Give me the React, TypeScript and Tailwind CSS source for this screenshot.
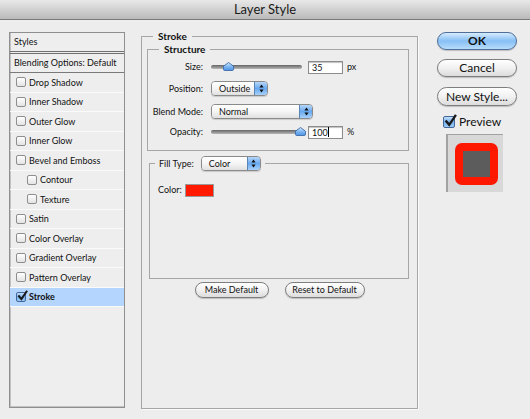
import React from "react";

function Check({ checked = false }: { checked?: boolean }) {
  if (checked) {
    return (
      <span className="relative w-[10px] h-[10px] shrink-0 rounded-[2px] border border-[#44679a] bg-linear-to-b from-[#c4e0fb] via-[#76b0ef] to-[#9ccaf7]">
        <svg viewBox="0 0 12 12" className="absolute -top-[3px] left-[0px] w-[11px] h-[11px]">
          <path d="M1.5 6 L4.8 10 L11 0.8" fill="none" stroke="#1a1a1a" strokeWidth="2.2" />
        </svg>
      </span>
    );
  }
  return (
    <span className="w-[10px] h-[10px] shrink-0 rounded-[2px] border border-[#8e8e8e] bg-linear-to-b from-white to-[#e3e3e3]" />
  );
}

function Popup({ label, w }: { label: string; w: string }) {
  return (
    <div className={`${w} h-[15px] flex rounded-[4px] border border-[#8a8a8a] overflow-hidden shadow-[0_1px_1px_rgba(0,0,0,0.15)]`}>
      <div className="flex-1 flex items-center pl-[7px] text-[9px] bg-linear-to-b from-white via-[#f5f5f5] to-[#e0e0e0]">
        {label}
      </div>
      <div className="w-[13px] border-l border-[#5b84b6] bg-linear-to-b from-[#b5d7f9] via-[#68a8ee] to-[#a8d1fa] flex items-center justify-center">
        <svg width="5" height="9" viewBox="0 0 5 9">
          <path d="M2.5 0.5 L4.6 3.6 H0.4 Z M2.5 8.5 L4.6 5.4 H0.4 Z" fill="#111" />
        </svg>
      </div>
    </div>
  );
}

function Slider({ pos }: { pos: number }) {
  return (
    <div className="relative w-[91px] h-[14px] flex items-center">
      <div className="w-full h-[4px] rounded-full bg-linear-to-b from-[#666] to-[#b8b8b8]" />
      <svg className="absolute top-[2px]" style={{ left: pos }} width="11" height="9" viewBox="0 0 11 9">
        <defs>
          <linearGradient id="thumbg" x1="0" y1="0" x2="0" y2="1">
            <stop offset="0" stopColor="#d8ecff" />
            <stop offset="0.5" stopColor="#7fb8f2" />
            <stop offset="1" stopColor="#4d92e4" />
          </linearGradient>
        </defs>
        <path
          d="M5.5 0.5 L10.5 4.2 V7.3 Q10.5 8.5 9.3 8.5 H1.7 Q0.5 8.5 0.5 7.3 V4.2 Z"
          fill="url(#thumbg)"
          stroke="#3c6ba8"
          strokeWidth="0.9"
        />
      </svg>
    </div>
  );
}

function TextBox({ value, cursor = false }: { value: string; cursor?: boolean }) {
  return (
    <div className="w-[35px] h-[13px] bg-white border border-[#8c8c8c] shadow-[inset_0_1px_1px_rgba(0,0,0,0.25)] text-[9px] leading-[11px] pl-[3px] flex items-center">
      <span>{value}</span>
      {cursor && <span className="w-[1px] h-[10px] bg-black" />}
    </div>
  );
}

function AquaButton({ children, w, primary = false, bold = false, h = "h-[18px]" }: { children: React.ReactNode; w: string; primary?: boolean; bold?: boolean; h?: string }) {
  return (
    <div
      className={`${w} ${h} rounded-full flex items-center justify-center shadow-[0_1px_1px_rgba(0,0,0,0.2)] ${
        primary
          ? "border border-[#4e6f9b] bg-linear-to-b from-[#d6ebfd] via-[#86bff4] to-[#b7dcfb]"
          : "border border-[#7e7e7e] bg-linear-to-b from-white via-[#f1f1f1] to-[#dcdcdc]"
      } ${bold ? "font-bold" : ""}`}
    >
      {children}
    </div>
  );
}

const items: { t: string; indent?: boolean; sel?: boolean }[] = [
  { t: "Drop Shadow" },
  { t: "Inner Shadow" },
  { t: "Outer Glow" },
  { t: "Inner Glow" },
  { t: "Bevel and Emboss" },
  { t: "Contour", indent: true },
  { t: "Texture", indent: true },
  { t: "Satin" },
  { t: "Color Overlay" },
  { t: "Gradient Overlay" },
  { t: "Pattern Overlay" },
  { t: "Stroke", sel: true },
];

export default function App() {
  return (
    <div className="w-[530px] h-[419px] bg-[#ededed] font-['Lato',sans-serif] text-[#111] overflow-hidden">
      <div className="h-[20px] bg-linear-to-b from-[#e9e9e9] to-[#bababa] border-b border-[#7a7a7a] flex items-center justify-center text-[13px] text-[#1a1a1a]">
        Layer Style
      </div>

      <div className="flex items-start pt-[10px] pl-[9px]">
        {/* Left styles list */}
        <div className="mt-[2px] w-[116px] h-[376px] border border-[#8f8f8f] shadow-[inset_1px_-1px_0_#c2c2c2] bg-[#eeeeee] flex flex-col text-[9px]">
          <div className="h-[18px] flex items-center pl-[4px] border-b-[3px] border-double border-[#6f6f6f] box-content">
            Styles
          </div>
          <div className="h-[19px] flex items-center pl-[4px] border-b border-[#7a7a7a]">
            Blending Options: Default
          </div>
          {items.map((it) => (
            <div
              key={it.t}
              className={`h-[19.5px] flex items-center gap-[3px] border-b border-[#fafafa] ${
                it.indent ? "pl-[17px]" : "pl-[6px]"
              } ${it.sel ? "bg-[#b4d5fd] font-bold" : ""}`}
            >
              <Check checked={it.sel} />
              <span>{it.t}</span>
            </div>
          ))}
        </div>

        {/* Middle stroke panel */}
        <fieldset className="ml-[16px] w-[277px] h-[379px] border border-[#a6a6a6] shadow-[1px_1px_0_#fafafa] flex flex-col">
          <legend className="ml-[11px] px-[5px] text-[10px] leading-[12px] font-bold">Stroke</legend>

          <fieldset className="mt-[1px] ml-[5px] w-[262px] border border-[#a6a6a6] pb-[11px]">
            <legend className="ml-[11px] px-[5px] text-[10px] leading-[12px] font-bold">Structure</legend>
            <div className="flex flex-col text-[9px]">
              <div className="mt-[5px] h-[14px] flex items-center">
                <span className="w-[55px] text-right">Size:</span>
                <div className="ml-[8px]">
                  <Slider pos={12} />
                </div>
                <div className="ml-[6px]">
                  <TextBox value="35" />
                </div>
                <span className="ml-[4px]">px</span>
              </div>
              <div className="mt-[7px] h-[15px] flex items-center">
                <span className="w-[55px] text-right">Position:</span>
                <div className="ml-[8px]">
                  <Popup label="Outside" w="w-[57px]" />
                </div>
              </div>
              <div className="mt-[8px] h-[15px] flex items-center">
                <span className="w-[55px] text-right">Blend Mode:</span>
                <div className="ml-[8px]">
                  <Popup label="Normal" w="w-[102px]" />
                </div>
              </div>
              <div className="mt-[6px] h-[14px] flex items-center">
                <span className="w-[55px] text-right">Opacity:</span>
                <div className="ml-[8px]">
                  <Slider pos={84} />
                </div>
                <div className="ml-[6px]">
                  <TextBox value="100" cursor />
                </div>
                <span className="ml-[4px]">%</span>
              </div>
            </div>
          </fieldset>

          <fieldset className="mt-[5px] ml-[7px] w-[260px] h-[123px] border border-[#a6a6a6]">
            <legend className="ml-[5px] px-[4px] flex items-center text-[9px]">
              <span>Fill Type:</span>
              <div className="ml-[7px]">
                <Popup label="Color" w="w-[60px]" />
              </div>
            </legend>
            <div className="mt-[12px] pl-[8px] h-[14px] flex items-center text-[9px]">
              <span>Color:</span>
              <span className="ml-[3px] w-[29px] h-[13px] bg-[#ff1a00] border border-[#9a9a9a]" />
            </div>
          </fieldset>

          <div className="mt-[3px] flex justify-center gap-[16px] text-[9px]">
            <AquaButton w="w-[74px]" h="h-[16px]">Make Default</AquaButton>
            <AquaButton w="w-[80px]" h="h-[16px]">Reset to Default</AquaButton>
          </div>
        </fieldset>

        {/* Right column */}
        <div className="ml-[19px] w-[80px] flex flex-col text-[12px]">
          <div className="mt-[2px]">
            <AquaButton w="w-[80px]" primary bold>OK</AquaButton>
          </div>
          <div className="mt-[9px]">
            <AquaButton w="w-[80px]">Cancel</AquaButton>
          </div>
          <div className="mt-[10px]">
            <AquaButton w="w-[80px]" h="h-[19px]">New Style...</AquaButton>
          </div>
          <div className="mt-[9px] h-[13px] pl-[6px] flex items-center gap-[4px]">
            <span className="relative w-[12px] h-[12px] rounded-[2px] border border-[#44679a] bg-linear-to-b from-[#c4e0fb] via-[#76b0ef] to-[#9ccaf7]">
              <svg viewBox="0 0 12 12" className="absolute -top-[3px] left-[0px] w-[13px] h-[13px]">
                <path d="M1.5 6 L4.8 10 L11 0.8" fill="none" stroke="#1a1a1a" strokeWidth="2.2" />
              </svg>
            </span>
            <span>Preview</span>
          </div>
          <div className="mt-[6px] ml-[9px] w-[57px] h-[58px] bg-[#d8d8d8] border-t border-l-2 border-[#a2a2a2] pt-[8px] pl-[7px]">
            <div className="w-[43px] h-[42px] rounded-[7px] bg-[#ff1800] p-[8px]">
              <div className="w-full h-full bg-[#5c5c5c]" />
            </div>
          </div>
        </div>
      </div>
    </div>
  );
}
